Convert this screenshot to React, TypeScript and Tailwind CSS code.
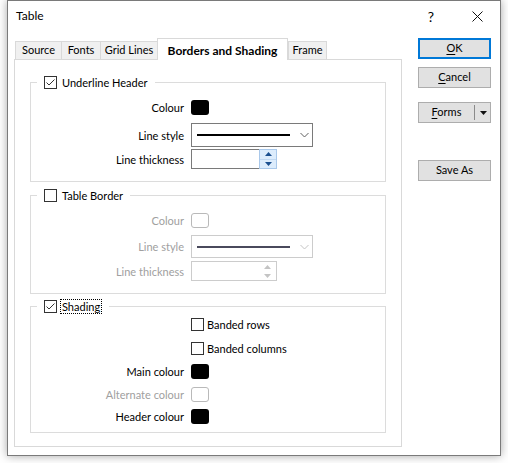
import React from 'react'

const Checkbox = ({ checked }: { checked?: boolean }) => (
  <span className="flex h-[13px] w-[13px] shrink-0 items-center justify-center border border-[#333333] bg-white">
    {checked && (
      <svg width="11" height="11" viewBox="0 0 11 11">
        <polyline points="1.5,5.5 4,8 9.5,2.5" fill="none" stroke="#333333" strokeWidth="1" />
      </svg>
    )}
  </span>
)

const Swatch = ({ filled }: { filled?: boolean }) =>
  filled ? (
    <span className="block h-[15px] w-[18px] rounded-[3px] bg-black" />
  ) : (
    <span className="block h-[15px] w-[18px] rounded-[3px] border border-[#b9b9b9] bg-white" />
  )

const LineSelect = ({ disabled, h }: { disabled?: boolean; h: string }) => (
  <div
    className={
      disabled
        ? `flex ${h} w-[122px] items-center border border-[#cccccc] bg-white pl-[5px]`
        : `flex ${h} w-[122px] items-center border border-[#7a7a7a] bg-white pl-[5px]`
    }
  >
    <span className={disabled ? 'h-[2px] w-[93px] bg-[#4a4a5c]' : 'h-[2px] w-[93px] bg-black'} />
    <svg className="ml-[10px]" width="9" height="6" viewBox="0 0 9 6">
      <polyline
        points="0.5,1 4.5,5 8.5,1"
        fill="none"
        stroke={disabled ? '#c4c4c4' : '#606060'}
        strokeWidth="1"
      />
    </svg>
  </div>
)

const Spin = ({ disabled }: { disabled?: boolean }) => (
  <div className="flex h-[20px] w-[86px]">
    <div
      className={
        disabled
          ? 'h-full w-[68px] border border-r-0 border-[#cccccc] bg-white'
          : 'h-full w-[68px] border border-r-0 border-[#7a7a7a] bg-white'
      }
    />
    {disabled ? (
      <div className="flex h-full w-[18px] flex-col items-center justify-center gap-[5px] border-y border-r border-[#cccccc] bg-white">
        <svg width="7" height="4" viewBox="0 0 7 4">
          <polygon points="0,4 3.5,0 7,4" fill="#c4c4c4" />
        </svg>
        <svg width="7" height="4" viewBox="0 0 7 4">
          <polygon points="0,0 3.5,4 7,0" fill="#c4c4c4" />
        </svg>
      </div>
    ) : (
      <div className="flex h-full w-[18px] flex-col border border-[#a9c8ea] bg-[#dcecfc]">
        <div className="flex flex-1 items-center justify-center border-b border-[#c1d8f1]">
          <svg width="7" height="4" viewBox="0 0 7 4">
            <polygon points="0,4 3.5,0 7,4" fill="#1a4f8f" />
          </svg>
        </div>
        <div className="flex flex-1 items-center justify-center">
          <svg width="7" height="4" viewBox="0 0 7 4">
            <polygon points="0,0 3.5,4 7,0" fill="#1a4f8f" />
          </svg>
        </div>
      </div>
    )}
  </div>
)

const Row = ({
  label,
  disabled,
  className,
  children,
}: {
  label: string
  disabled?: boolean
  className?: string
  children: React.ReactNode
}) => (
  <div className={`flex items-center gap-[7px] ${className ?? ''}`}>
    <span
      className={
        disabled
          ? 'w-[153px] whitespace-nowrap text-right leading-none text-[#a0a0a0]'
          : 'w-[153px] whitespace-nowrap text-right leading-none text-black'
      }
    >
      {label}
    </span>
    {children}
  </div>
)

const Group = ({
  header,
  className,
  children,
}: {
  header: React.ReactNode
  className?: string
  children: React.ReactNode
}) => (
  <div className={`relative border border-[#dcdcdc] ${className ?? ''}`}>
    <div className="absolute left-[6px] top-[-1px] flex h-[16px] -translate-y-1/2 items-center bg-white px-[7px]">
      {header}
    </div>
    {children}
  </div>
)

const Button = ({ children, primary, className }: { children: React.ReactNode; primary?: boolean; className?: string }) => (
  <div
    className={
      primary
        ? `flex h-[21px] w-[73px] items-center justify-center border-2 border-[#0078d7] bg-[#e1e1e1] ${className ?? ''}`
        : `flex h-[21px] w-[73px] items-center justify-center border border-[#adadad] bg-[#e1e1e1] ${className ?? ''}`
    }
  >
    {children}
  </div>
)

const tabs = [
  { name: 'Source', w: 'w-[46px]' },
  { name: 'Fonts', w: 'w-[39px]' },
  { name: 'Grid Lines', w: 'w-[57px]' },
  { name: 'Borders and Shading', w: 'w-[131px]', active: true },
  { name: 'Frame', w: 'w-[39px]' },
]

export default function App() {
  return (
    <div className="h-[463px] w-[508px] overflow-hidden bg-white pl-[7px] font-['Lato','Noto_Sans',sans-serif] text-[11px] text-black">
      <div className="h-[456px] w-[494px] border border-[#7a7a7a] bg-white shadow-[0_0_9px_rgba(0,0,0,0.35)]">
        {/* title bar */}
        <div className="flex h-[30px] items-center">
          <span className="flex-1 pl-[8px] text-[12px]">Table</span>
          <span className="flex h-[30px] w-[46px] items-center justify-center text-[14px]">?</span>
          <span className="flex h-[30px] w-[46px] items-center justify-center">
            <svg width="11" height="11" viewBox="0 0 11 11">
              <path d="M0.5 0.5 L10.5 10.5 M10.5 0.5 L0.5 10.5" stroke="#111111" strokeWidth="1" />
            </svg>
          </span>
        </div>

        <div className="flex gap-[16px] pl-[6px] pt-[7px]">
          {/* left column: tabs + panel */}
          <div className="w-[388px]">
            <div className="flex h-[21px] items-end whitespace-nowrap pl-[1px]">
              {tabs.map((t, i) =>
                t.active ? (
                  <div
                    key={t.name}
                    className={`relative z-10 -mb-[1px] flex h-[22px] ${t.w} items-start justify-center border-x border-t border-[#d9d9d9] bg-white pt-[3px] text-[12px] font-bold`}
                  >
                    {t.name}
                  </div>
                ) : (
                  <div
                    key={t.name}
                    className={
                      i === tabs.length - 1
                        ? `flex h-[18px] ${t.w} items-center justify-center border-x border-t border-[#d9d9d9] bg-[#f0f0f0]`
                        : `flex h-[18px] ${t.w} items-center justify-center border-l border-t border-[#d9d9d9] bg-[#f0f0f0]`
                    }
                  >
                    {t.name}
                  </div>
                ),
              )}
            </div>

            <div className="border border-[#d9d9d9] px-[15px] pb-[13px] pt-[22px]">
              <Group
                className="pb-[12px] pt-[17px]"
                header={
                  <div className="flex items-center gap-[5px] whitespace-nowrap">
                    <Checkbox checked />
                    <span className="leading-none">Underline Header</span>
                  </div>
                }
              >
                <Row label="Colour" className="h-[15px]">
                  <Swatch filled />
                </Row>
                <Row label="Line style" className="mt-[8px]">
                  <LineSelect h="h-[24px]" />
                </Row>
                <Row label="Line thickness" className="mt-[2px]">
                  <Spin />
                </Row>
              </Group>

              <Group
                className="mt-[13px] pb-[12px] pt-[17px]"
                header={
                  <div className="flex items-center gap-[5px] whitespace-nowrap">
                    <Checkbox />
                    <span className="leading-none">Table Border</span>
                  </div>
                }
              >
                <Row label="Colour" disabled className="h-[15px]">
                  <Swatch />
                </Row>
                <Row label="Line style" disabled className="mt-[7px]">
                  <LineSelect disabled h="h-[23px]" />
                </Row>
                <Row label="Line thickness" disabled className="mt-[3px]">
                  <Spin disabled />
                </Row>
              </Group>

              <Group
                className="mt-[12px] pb-[8px] pt-[11px]"
                header={
                  <div className="flex items-center gap-[3px] whitespace-nowrap">
                    <Checkbox checked />
                    <span className="border border-dotted border-black px-[1px] leading-[13px]">Shading</span>
                  </div>
                }
              >
                <Row label="" className="h-[13px]">
                  <div className="flex items-center gap-[3px] whitespace-nowrap">
                    <Checkbox />
                    <span className="leading-none">Banded rows</span>
                  </div>
                </Row>
                <Row label="" className="mt-[11px] h-[13px]">
                  <div className="flex items-center gap-[3px] whitespace-nowrap">
                    <Checkbox />
                    <span className="leading-none">Banded columns</span>
                  </div>
                </Row>
                <Row label="Main colour" className="mt-[9px] h-[15px]">
                  <Swatch filled />
                </Row>
                <Row label="Alternate colour" disabled className="mt-[8px] h-[15px]">
                  <Swatch />
                </Row>
                <Row label="Header colour" className="mt-[7px] h-[15px]">
                  <Swatch filled />
                </Row>
              </Group>
            </div>
          </div>

          {/* right column: buttons */}
          <div className="flex flex-col">
            <Button primary>
              <span>
                <span className="underline underline-offset-2">O</span>K
              </span>
            </Button>
            <Button className="mt-[8px]">
              <span>
                <span className="underline underline-offset-2">C</span>ancel
              </span>
            </Button>
            <Button className="mt-[14px] !justify-start">
              <span className="w-[55px] text-center">
                <span className="underline underline-offset-2">F</span>orms
              </span>
              <span className="h-[15px] w-[1px] bg-[#8a8a8a]" />
              <svg className="ml-[5px]" width="7" height="4" viewBox="0 0 7 4">
                <polygon points="0,0 3.5,4 7,0" fill="#111111" />
              </svg>
            </Button>
            <Button className="mt-[37px]">Save As</Button>
          </div>
        </div>
      </div>
    </div>
  )
}
